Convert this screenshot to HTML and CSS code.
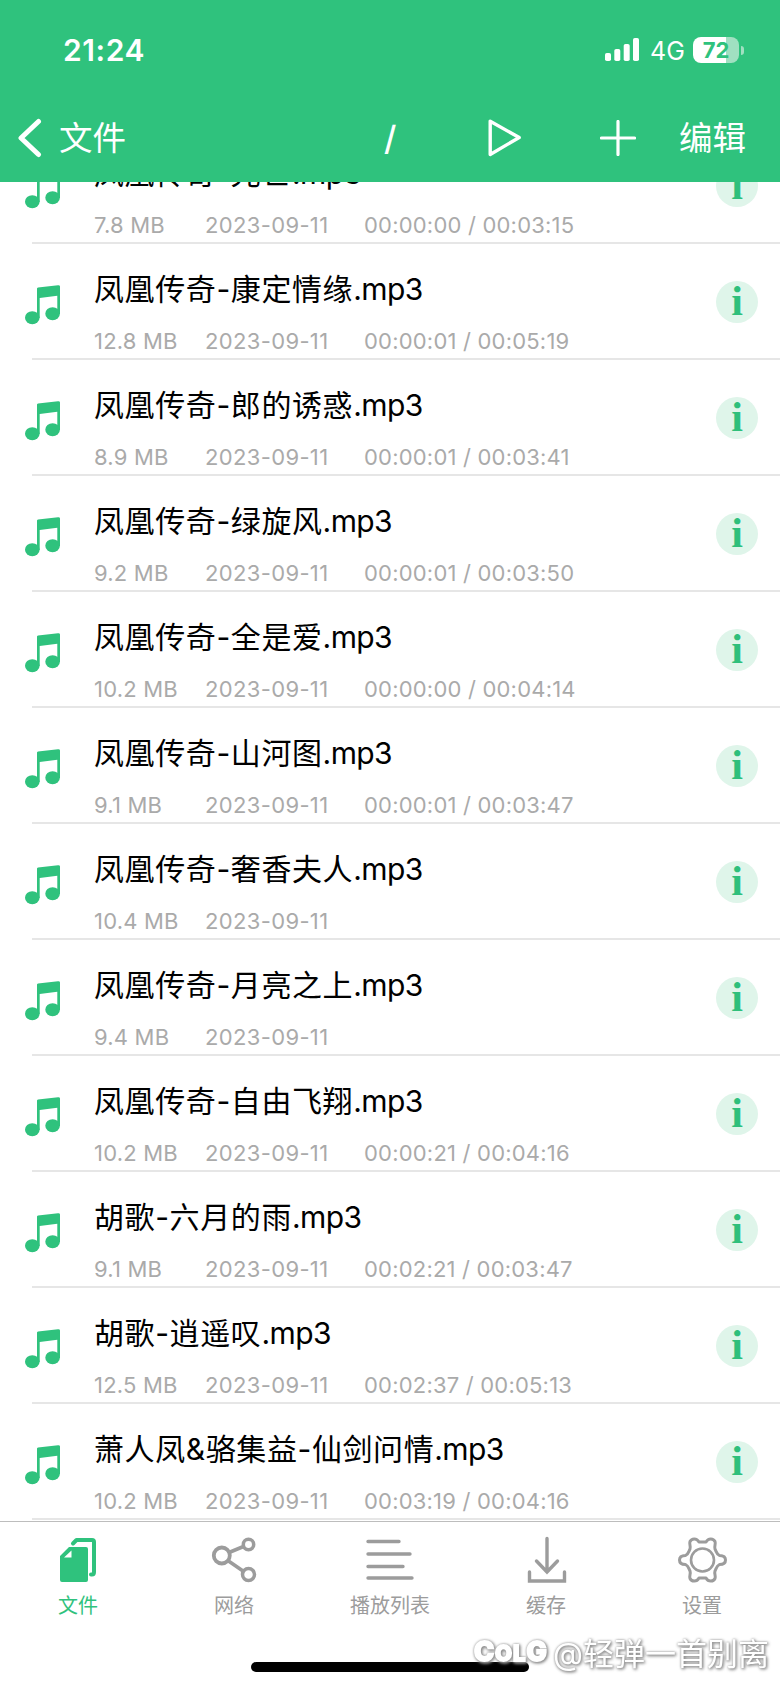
FILE: index.html
```
<!DOCTYPE html>
<html lang="zh-CN">
<head>
<meta charset="utf-8">
<title>文件</title>
<link rel="stylesheet" href="styles.css">
</head>
<body>
<svg class="defs" width="0" height="0">
  <symbol id="note" viewBox="0 0 36 40">
    <path d="M12 3.600Q12 2.600 13 2.400L33 .2Q35 0 35 1.600V29h-2.700V10.800L14.700 13V33H12z" fill="#2fc27d"/>
    <ellipse cx="7.300" cy="32.700" rx="7.300" ry="6.500" fill="#2fc27d"/>
    <ellipse cx="27.600" cy="28.700" rx="7.300" ry="6.500" fill="#2fc27d"/>
  </symbol>
</svg>
<div class="screen">
  <header class="header">
    <div class="status">
      <span class="clock">21:24</span>
      <div class="indicators">
        <svg class="signal" width="35" height="24" viewBox="0 0 35 24" fill="#fff"><rect x="0" y="15" width="6" height="8" rx="1.800"/><rect x="9.300" y="11" width="6" height="12" rx="1.800"/><rect x="18.700" y="6" width="6" height="17" rx="1.800"/><rect x="28" y="0" width="6" height="23" rx="1.800"/></svg>
        <span class="network">4G</span>
        <div class="battery"><span>72</span></div><i class="cap"></i>
      </div>
    </div>
    <nav class="nav">
      <svg class="back" width="24" height="40" viewBox="0 0 24 40"><path d="M20.500 3.500L3 20l17.500 16.500" fill="none" stroke="#fff" stroke-width="5" stroke-linecap="round" stroke-linejoin="round"/></svg>
      <span class="back-label">文件</span>
      <span class="path">/</span>
      <svg class="play" width="34" height="38" viewBox="0 0 34 38"><path d="M2.200 2.200V35.500L31.200 18.500z" fill="none" stroke="#fff" stroke-width="3.400" stroke-linejoin="round"/></svg>
      <svg class="plus" width="36" height="36" viewBox="0 0 36 36"><path d="M18 1.500v33M1.500 18h33" stroke="#fff" stroke-width="3.200" stroke-linecap="round"/></svg>
      <span class="edit">编辑</span>
    </nav>
  </header>
  <main class="list" id="list"></main>
  <footer class="tabs">
    <div class="tab active"><svg width="50" height="50" viewBox="0 0 50 50"><path d="M20 8.500L23.500 5H39Q41 5 41 7V37Q41 39.500 39 39.500H38" fill="none" stroke="#2fc27d" stroke-width="4" stroke-linecap="round" stroke-linejoin="round"/><path fill-rule="evenodd" d="M16 12H33Q35 12 35 14V45Q35 47 33 47H9Q7 47 7 45V21zM11 22.500h7.500V15.500z" fill="#2fc27d"/></svg><span>文件</span></div>
    <div class="tab"><svg width="50" height="50" viewBox="0 0 50 50" fill="none" stroke="#9c9c9c"><circle cx="12.800" cy="20.500" r="8" stroke-width="3.800"/><circle cx="39.500" cy="9.500" r="5.200" stroke-width="3.500"/><circle cx="39.500" cy="39.500" r="6" stroke-width="3.500"/><path d="M20 17.500l14.500-6M19.500 26L34 36" stroke-width="3.600"/></svg><span>网络</span></div>
    <div class="tab"><svg width="50" height="50" viewBox="0 0 50 50"><path d="M3 6.500h31M3 19h42M3 31.500h35M3 43h44" stroke="#9c9c9c" stroke-width="3.400" stroke-linecap="round"/></svg><span>播放列表</span></div>
    <div class="tab"><svg width="50" height="50" viewBox="0 0 50 50"><path d="M26 3.500V37M15.500 26L26 37l10.500-11M8.500 37V46H43.500V37" fill="none" stroke="#9c9c9c" stroke-width="3.400" stroke-linecap="round" stroke-linejoin="miter"/></svg><span>缓存</span></div>
    <div class="tab"><svg width="50" height="50" viewBox="0 0 50 50" fill="none" stroke="#9c9c9c" stroke-width="3"><circle cx="25.500" cy="25" r="11.500" stroke-width="2.600"/><path transform="translate(.5 0)" stroke-linejoin="round" d="M21.500 7C19 2.500 14 3.500 12.500 6.500C11.500 9.500 13.500 11 12.500 14C11 17 11 19 8 20.500C4 20.500 2 22 2 25S4 29.500 8 29.500C11 31 11 33 12.500 36C13.500 39 11.500 40.500 12.500 43.500C14 46.500 19 47.500 21.500 43H28.500C31 47.500 36 46.500 37.500 43.500C38.500 40.500 36.500 39 37.500 36C39 33 39 31 42 29.500C46 29.500 48 28 48 25S46 20.500 42 20.500C39 19 39 17 37.500 14C36.500 11 38.500 9.500 37.500 6.500C36 3.500 31 2.500 28.500 7Z"/></svg><span>设置</span></div>
    <div class="home"></div>
    <div class="watermark"><b>C<small>OL</small>G</b><span>@轻弹一首别离</span></div>
  </footer>
</div>
<script src="list.js"></script>
</body>
</html>
```
FILE: styles.css
```
body { margin: 0; background: #fff; font-family: Inter, "Noto Sans CJK SC", sans-serif; }
.defs { position: absolute; }
.screen { width: 780px; height: 1688px; display: flex; flex-direction: column; overflow: hidden; background: #fff; }
.header { height: 182px; flex: none; background: #2fc27d; color: #fff; }
.status { height: 96px; display: flex; justify-content: space-between; padding: 0 36px 0 63px; }
.clock { font-size: 30px; line-height: 36px; font-weight: 600; margin-top: 32px; letter-spacing: .6px; }
.indicators { display: flex; align-items: flex-start; padding-top: 37px; }
.signal { margin-top: 1px; }
.network { font-size: 25px; line-height: 28px; margin-left: 10px; width: 34px; white-space: nowrap; }
.battery { width: 46px; height: 26px; margin-left: 9px; border-radius: 8px; background: linear-gradient(90deg, #fff 72%, #a0e0c1 72%); color: #2fc27d; font-size: 22px; line-height: 26px; font-weight: 700; text-align: center; }
.cap { width: 3px; height: 9px; margin: 9px 0 0 2px; border-radius: 0 4px 4px 0; background: #a0e0c1; }
.nav { height: 84px; display: flex; align-items: center; font-size: 33.5px; line-height: 40px; }
.back { margin: 0 0 0 18px; }
.back-label { margin-left: 17px; width: 68px; }
.path { margin-left: 257px; width: 16px; font-weight: 500; }
.play { margin-left: 88px; }
.plus { margin-left: 78px; }
.edit { margin-left: 43px; }
.list { flex: 1; min-height: 0; overflow: hidden; }
.row { height: 116px; display: grid; grid-template-columns: 94px 1fr 68px; }
.row:first-child { margin-top: -54px; }
.note { width: 36px; height: 40px; margin: 41px 0 0 25px; }
.title { margin-top: 23px; height: 44px; line-height: 44px; font-size: 30px; letter-spacing: .6px; color: #000; white-space: nowrap; }
.ext { letter-spacing: -.6px; }
.meta { display: grid; grid-template-columns: 111px 159px 1fr; height: 30px; margin-top: 15px; line-height: 30px; font-size: 22px; letter-spacing: .2px; color: #aaa; white-space: nowrap; }
.date { letter-spacing: .35px; }
.info { width: 42px; height: 42px; margin: 37px 0 0 4px; border-radius: 50%; background: #dff5ea; color: #2fbf7b; font-family: "Liberation Serif", serif; font-weight: 700; font-size: 42px; line-height: 41px; text-align: center; }
.rule { grid-column: 1 / 4; height: 2px; margin-left: 32px; background: #e6e6e6; align-self: end; }
.tabs { position: relative; height: 167px; flex: none; display: flex; box-sizing: border-box; border-top: 1px solid #bdbdbd; background: #fff; }
.tab { flex: 1; display: flex; flex-direction: column; align-items: center; padding-top: 13px; color: #9c9c9c; font-size: 20px; line-height: 30px; }
.tab svg { margin-bottom: 6px; }
.active { color: #2fc27d; }
.home { position: absolute; left: 251px; top: 140px; width: 278px; height: 10px; border-radius: 5px; background: #000; }
.watermark { position: absolute; left: 474px; top: 107px; display: flex; align-items: center; height: 44px; color: #fff; font-size: 31px; white-space: nowrap; filter: drop-shadow(1px 1px 1.5px #888) drop-shadow(0 0 1px #aaa); }
.watermark b { width: 79px; font-size: 27px; font-weight: 800; -webkit-text-stroke: 2px #fff; letter-spacing: 1px; }
.watermark small { font-size: 22px; }
```
FILE: list.js
```
const files = [
  ["凤凰传奇-光芒", "7.8 MB", "00:00:00 / 00:03:15"],
  ["凤凰传奇-康定情缘", "12.8 MB", "00:00:01 / 00:05:19"],
  ["凤凰传奇-郎的诱惑", "8.9 MB", "00:00:01 / 00:03:41"],
  ["凤凰传奇-绿旋风", "9.2 MB", "00:00:01 / 00:03:50"],
  ["凤凰传奇-全是爱", "10.2 MB", "00:00:00 / 00:04:14"],
  ["凤凰传奇-山河图", "9.1 MB", "00:00:01 / 00:03:47"],
  ["凤凰传奇-奢香夫人", "10.4 MB", ""],
  ["凤凰传奇-月亮之上", "9.4 MB", ""],
  ["凤凰传奇-自由飞翔", "10.2 MB", "00:00:21 / 00:04:16"],
  ["胡歌-六月的雨", "9.1 MB", "00:02:21 / 00:03:47"],
  ["胡歌-逍遥叹", "12.5 MB", "00:02:37 / 00:05:13"],
  ["萧人凤&amp;骆集益-仙剑问情", "10.2 MB", "00:03:19 / 00:04:16"]
];
document.getElementById("list").innerHTML = files.map(([name, size, time]) => `
  <div class="row">
    <svg class="note"><use href="#note"/></svg>
    <div><div class="title">${name}<span class="ext">.mp3</span></div>
    <div class="meta"><span>${size}</span><span class="date">2023-09-11</span><span>${time}</span></div></div>
    <div class="info">i</div>
    <div class="rule"></div>
  </div>`).join("");
```
